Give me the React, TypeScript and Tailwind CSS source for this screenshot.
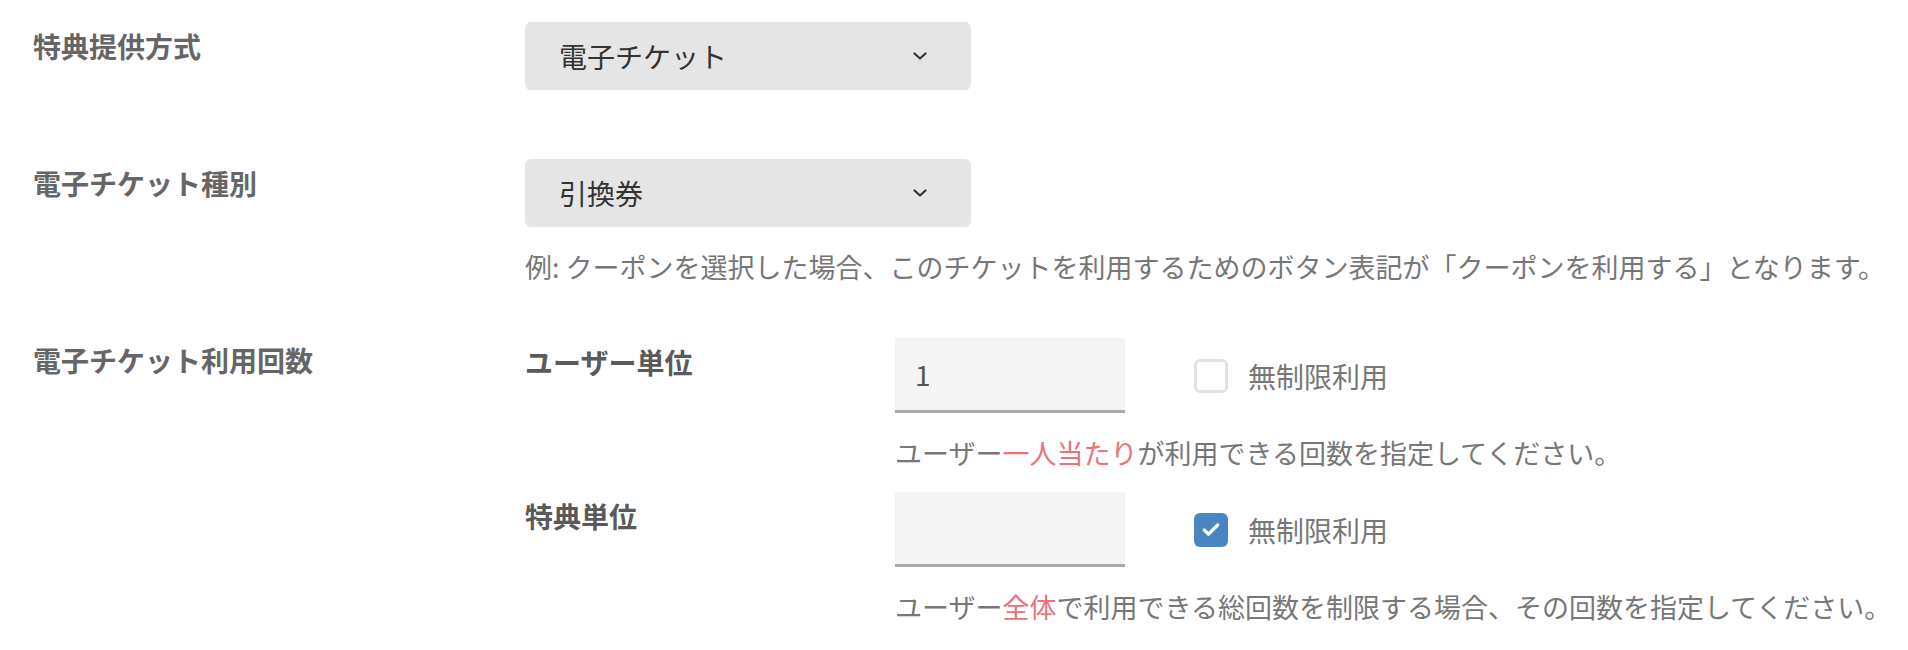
import { Check } from "lucide-react";

function Chevron() {
  return (
    <svg width="14" height="8" viewBox="0 0 14 8" fill="none">
      <path d="M1.5 1.5L7 6.5L12.5 1.5" stroke="#333" strokeWidth="2.2" strokeLinecap="round" strokeLinejoin="round" />
    </svg>
  );
}

function SelectBox({ value }: { value: string }) {
  return (
    <div className="w-[446px] h-[68px] rounded-[6px] bg-[#e5e5e5] flex items-center justify-between pl-[34px] pr-[44px]">
      <span className="text-[28px] leading-[40px] text-[#333]">{value}</span>
      <Chevron />
    </div>
  );
}

function CheckBox({ checked }: { checked: boolean }) {
  return checked ? (
    <div className="w-[34px] h-[34px] rounded-[6px] bg-[#4a85c1] flex items-center justify-center">
      <Check size={20} strokeWidth={4} color="white" />
    </div>
  ) : (
    <div className="w-[34px] h-[34px] rounded-[6px] border-[3px] border-[#e0e3e8] bg-white" />
  );
}

function CountRow({
  label,
  value,
  checked,
  help,
}: {
  label: string;
  value: string;
  checked: boolean;
  help: React.ReactNode;
}) {
  return (
    <div className="flex">
      <div className="w-[370px] pt-[4px] text-[28px] leading-[40px] font-bold text-[#5a5a5a]">{label}</div>
      <div className="flex flex-col">
        <div className="flex items-center">
          <div className="w-[230px] h-[75px] bg-[#f4f4f4] border-b-[3px] border-[#aaa] flex items-center pl-[20px] text-[28px] text-[#555]">
            {value}
          </div>
          <div className="ml-[69px] flex items-center gap-[20px]">
            <CheckBox checked={checked} />
            <span className="text-[28px] leading-[40px] text-[#777]">無制限利用</span>
          </div>
        </div>
        <p className="mt-[20px] text-[27px] leading-[40px] text-[#777]">{help}</p>
      </div>
    </div>
  );
}

export default function App() {
  return (
    <div
      className="w-[1908px] h-[650px] bg-white pl-[33px] pt-[22px] overflow-hidden"
      style={{ fontFamily: '"Noto Sans CJK JP", "Noto Sans", sans-serif' }}
    >
      {/* 特典提供方式 */}
      <div className="flex">
        <div className="w-[492px] pt-[4px] text-[28px] leading-[40px] font-bold text-[#666]">特典提供方式</div>
        <SelectBox value="電子チケット" />
      </div>

      {/* 電子チケット種別 */}
      <div className="flex mt-[69px]">
        <div className="w-[492px] pt-[4px] text-[28px] leading-[40px] font-bold text-[#666]">電子チケット種別</div>
        <div className="flex flex-col">
          <SelectBox value="引換券" />
          <p className="mt-[20px] text-[27px] leading-[40px] text-[#777] whitespace-nowrap">
            例: クーポンを選択した場合、このチケットを利用するためのボタン表記が「クーポンを利用する」となります。
          </p>
        </div>
      </div>

      {/* 電子チケット利用回数 */}
      <div className="flex mt-[51px]">
        <div className="w-[492px] pt-[2px] text-[28px] leading-[40px] font-bold text-[#666]">電子チケット利用回数</div>
        <div className="flex flex-col gap-[19px]">
          <CountRow
            label="ユーザー単位"
            value="1"
            checked={false}
            help={
              <>
                ユーザー<span className="text-[#e8737a]">一人当たり</span>が利用できる回数を指定してください。
              </>
            }
          />
          <CountRow
            label="特典単位"
            value=""
            checked={true}
            help={
              <>
                ユーザー<span className="text-[#e8737a]">全体</span>で利用できる総回数を制限する場合、その回数を指定してください。
              </>
            }
          />
        </div>
      </div>
    </div>
  );
}
